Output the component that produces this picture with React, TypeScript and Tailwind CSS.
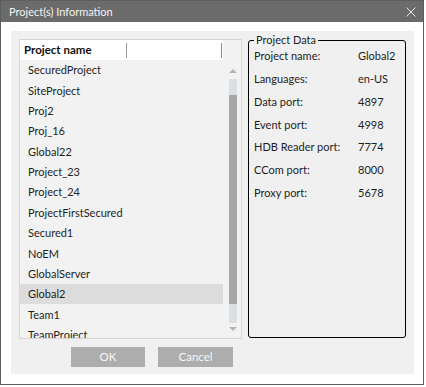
import React from "react";

const items = [
  "SecuredProject",
  "SiteProject",
  "Proj2",
  "Proj_16",
  "Global22",
  "Project_23",
  "Project_24",
  "ProjectFirstSecured",
  "Secured1",
  "NoEM",
  "GlobalServer",
  "Global2",
  "Team1",
  "TeamProject",
];

const data: [string, string][] = [
  ["Project name:", "Global2"],
  ["Languages:", "en-US"],
  ["Data port:", "4897"],
  ["Event port:", "4998"],
  ["HDB Reader port:", "7774"],
  ["CCom port:", "8000"],
  ["Proxy port:", "5678"],
];

export default function App() {
  return (
    <div className="w-[426px] h-[387px] bg-white font-[Lato,'Noto_Sans',sans-serif] text-[11px] text-[#1e1e1e]">
      <div className="w-[424px] h-[385px] border border-[#5e5e5e] flex flex-col bg-white">
        {/* title bar */}
        <div className="h-[21px] bg-[#6b6b6b] flex items-center justify-between pl-[8px] pr-[7px] shrink-0">
          <span className="text-[#f4f4f4] text-[11px] leading-none">Project(s) Information</span>
          <svg width="10" height="10" viewBox="0 0 10 10" className="mt-[1px]">
            <path d="M0.5 0.5 L9.5 9.5 M9.5 0.5 L0.5 9.5" stroke="#e6e6e6" strokeWidth="1" />
          </svg>
        </div>
        {/* body */}
        <div className="flex-1 pt-[9px] pl-[10px] pr-[9px] pb-[10px]">
          <div className="w-full h-full bg-[#f0f0f0] pl-[8px] pt-[2px] flex flex-col">
            <div className="flex items-start">
              {/* list box */}
              <div className="mt-[6px] w-[223px] h-[300px] border border-[#d6d6d6] bg-[#f2f2f2] flex overflow-hidden">
                <div className="w-[203px] flex flex-col">
                  <div className="h-[20px] bg-white flex items-center shrink-0">
                    <div className="w-[106px] pl-[4px] font-bold text-[11.5px] text-[#111]">Project name</div>
                    <div className="w-px h-[15px] bg-[#9a9a9a]" />
                    <div className="flex-1" />
                    <div className="w-px h-[15px] bg-[#8a8a8a]" />
                    <div className="w-px" />
                  </div>
                  <div className="flex-1 overflow-hidden">
                    {items.map((it) => (
                      <div
                        key={it}
                        className={
                          "h-[20.35px] flex items-center pl-[8px] pt-[1px] " +
                          (it === "Global2" ? "bg-[#dcdcdc]" : "")
                        }
                      >
                        {it}
                      </div>
                    ))}
                  </div>
                </div>
                {/* scrollbar column */}
                <div className="w-[18px] flex flex-col items-center pl-[1px]">
                  <div className="h-[29px] shrink-0" />
                  <svg width="8" height="4" viewBox="0 0 8 4" className="shrink-0">
                    <path d="M0 4 L4 0 L8 4 Z" fill="#b4b4b4" />
                  </svg>
                  <div className="mt-[6px] w-[8px] h-[244px] bg-[#dbdfe3] flex flex-col shrink-0">
                    <div className="mt-[16px] h-[209px] bg-[#a6a6a6]" />
                  </div>
                  <svg width="8" height="4" viewBox="0 0 8 4" className="mt-[4px] shrink-0">
                    <path d="M0 0 L8 0 L4 4 Z" fill="#b4b4b4" />
                  </svg>
                </div>
              </div>
              {/* group box */}
              <fieldset className="ml-[6px] w-[158px] h-[305px] border border-black rounded-[3px] pl-[5px]">
                <legend className="px-[2px] leading-[14px] text-[11px]">Project Data</legend>
                <div className="-mt-[2px] flex flex-col">
                  {data.map(([k, v]) => (
                    <div key={k} className="h-[22.8px] flex items-center">
                      <div className="w-[104px]">{k}</div>
                      <div>{v}</div>
                    </div>
                  ))}
                </div>
              </fieldset>
            </div>
            {/* buttons */}
            <div className="mt-[8px] ml-[52px] flex gap-[13px]">
              <div className="w-[74px] h-[20px] bg-[#adadad] text-[#f7f7f7] text-[11.5px] flex items-center justify-center">OK</div>
              <div className="w-[75px] h-[20px] bg-[#adadad] text-[#f7f7f7] text-[11.5px] flex items-center justify-center">Cancel</div>
            </div>
          </div>
        </div>
      </div>
    </div>
  );
}
